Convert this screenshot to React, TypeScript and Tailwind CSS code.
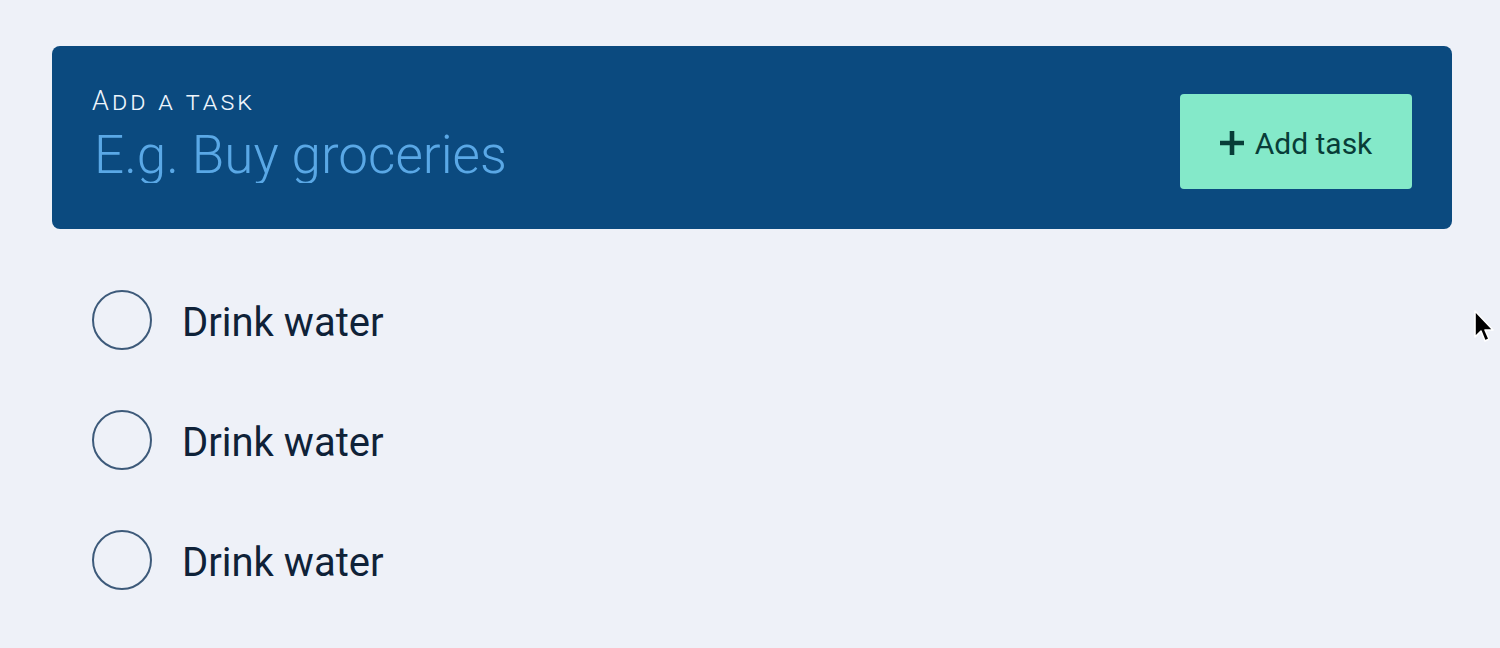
const tasks = [
  { id: 1, title: 'Drink water' },
  { id: 2, title: 'Drink water' },
  { id: 3, title: 'Drink water' },
]

function PlusIcon() {
  return (
    <svg width="24" height="24" viewBox="0 0 24 24" className="shrink-0">
      <path d="M12 0 V24 M0 12 H24" stroke="currentColor" strokeWidth="4.6" />
    </svg>
  )
}

function Cursor() {
  return (
    <svg className="absolute left-[1473px] top-[309px]" width="22" height="36" viewBox="0 0 22 36">
      <path d="M2 2 L2 28 L8 22 L12 32 L16 30 L12 21 L20 21 Z" fill="#000" stroke="#fff" strokeWidth="1.6" strokeLinejoin="round" />
    </svg>
  )
}

export default function App() {
  return (
    <div className="relative min-h-[648px] w-full bg-[#eef1f8] pt-[46px] font-['Roboto',sans-serif]">
      <div className="ml-[52px] flex h-[183px] w-[1400px] items-start justify-between rounded-lg bg-[#0b4a7f] px-10">
        <div className="flex flex-col pt-[40px]">
          <label className="text-[27px] leading-[30px] font-light tracking-[0.115em] text-[#eef5fc] [font-variant:small-caps]">
            Add a task
          </label>
          <input
            className="mt-[11px] w-[700px] bg-transparent pl-[2px] text-[53px] leading-[56px] font-light text-[#5aa8e6] placeholder:text-[#5aa8e6] outline-none"
            placeholder="E.g. Buy groceries"
          />
        </div>
        <button className="mt-[48px] flex h-[95px] w-[232px] items-center justify-center gap-[11px] rounded-[4px] bg-[#84e9c9] pt-[3px] text-[30px] text-[#083d38]">
          <PlusIcon />
          <span>Add task</span>
        </button>
      </div>

      <ul className="mt-[61px] flex flex-col gap-[60px] pl-[92px]">
        {tasks.map((task) => (
          <li key={task.id} className="flex items-center gap-[30px]">
            <span className="h-[60px] w-[60px] rounded-full border-2 border-[#3d5a7a]" />
            <span className="pt-[6px] text-[40px] leading-[54px] text-[#0f2238]">{task.title}</span>
          </li>
        ))}
      </ul>
      <Cursor />
    </div>
  )
}
